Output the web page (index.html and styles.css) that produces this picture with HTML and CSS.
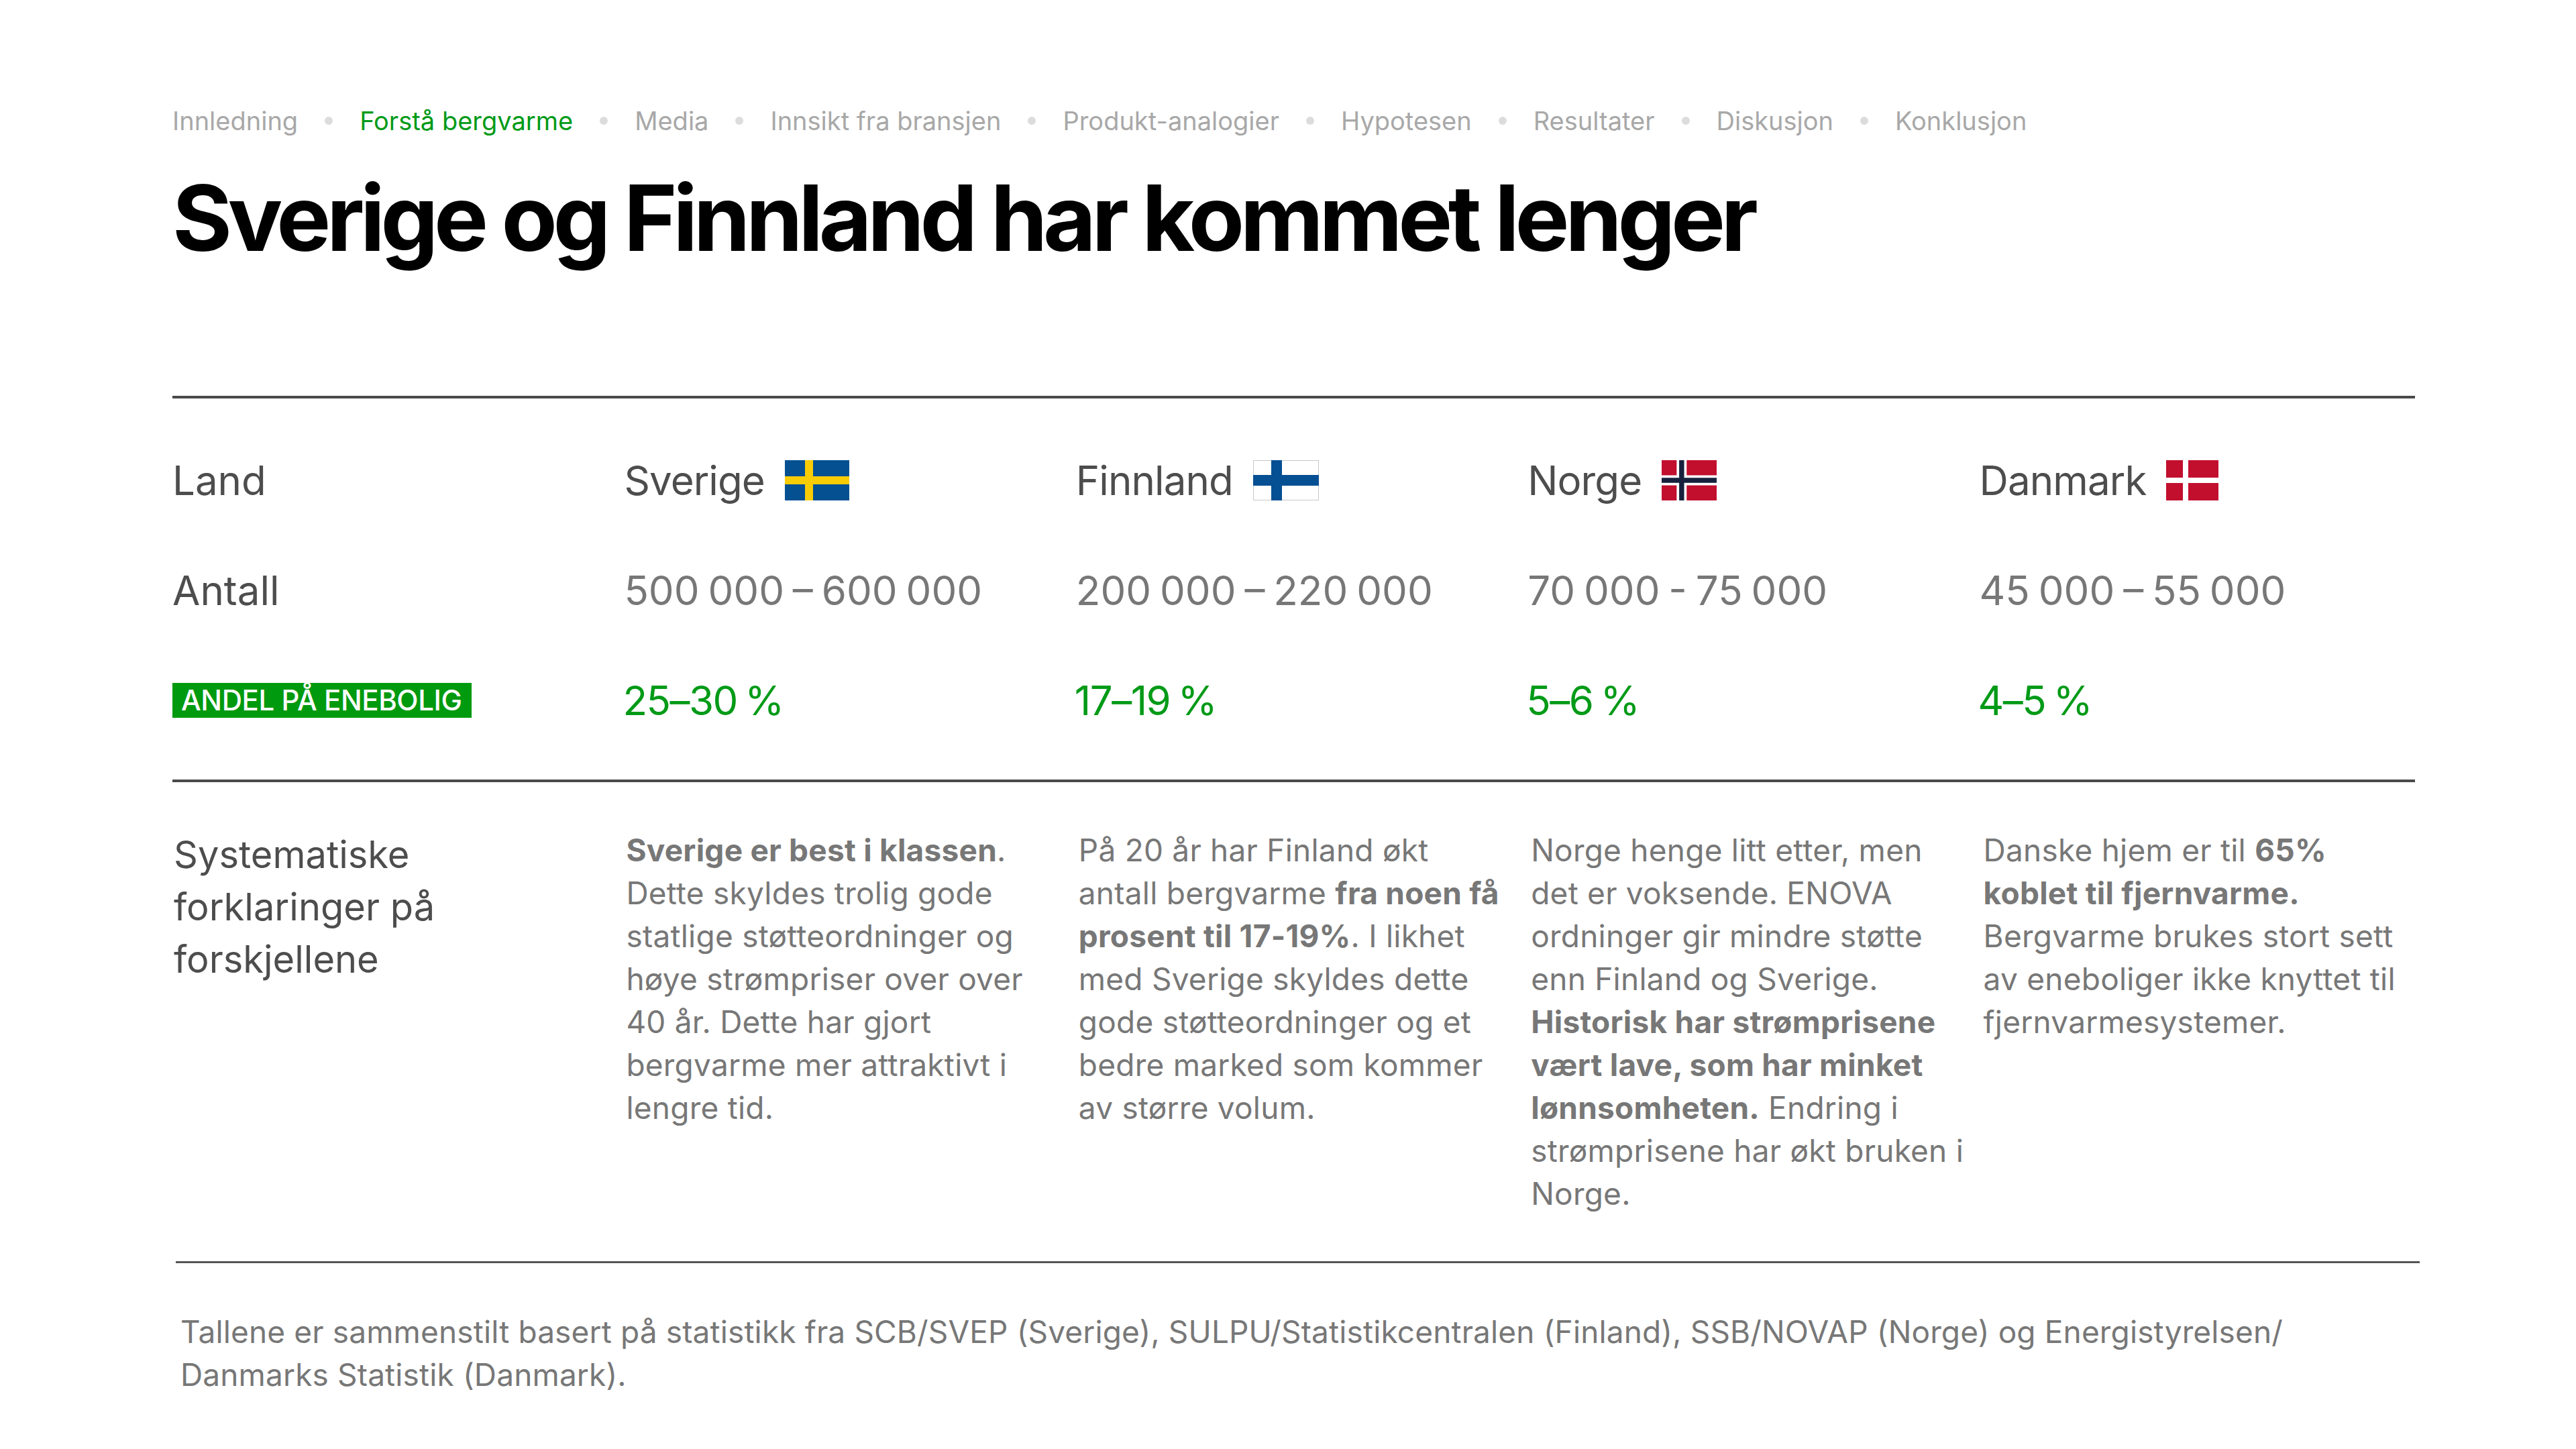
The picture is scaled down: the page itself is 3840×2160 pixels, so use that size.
FILE: index.html
```html
<!DOCTYPE html>
<html lang="no">
<head>
<meta charset="utf-8">
<title>Sverige og Finnland har kommet lenger</title>
<link rel="stylesheet" href="styles.css">
</head>
<body>
<main class="slide">
  <nav class="crumbs">
    <span class="crumb">Innledning</span><span class="dot"></span>
    <span class="crumb active">Forstå bergvarme</span><span class="dot"></span>
    <span class="crumb">Media</span><span class="dot"></span>
    <span class="crumb">Innsikt fra bransjen</span><span class="dot"></span>
    <span class="crumb">Produkt-analogier</span><span class="dot"></span>
    <span class="crumb">Hypotesen</span><span class="dot"></span>
    <span class="crumb">Resultater</span><span class="dot"></span>
    <span class="crumb">Diskusjon</span><span class="dot"></span>
    <span class="crumb">Konklusjon</span>
  </nav>

  <h1 class="title">Sverige og Finnland har kommet lenger</h1>

  <section class="table">
    <div class="row">
      <div class="label">Land</div>
      <div class="country"><span class="name">Sverige</span>
        <svg class="flag" width="96" height="60" viewBox="0 0 16 10" preserveAspectRatio="none"><rect width="16" height="10" fill="#055091"/><rect x="5" width="2" height="10" fill="#f9cc05"/><rect y="4" width="16" height="2" fill="#f9cc05"/></svg>
      </div>
      <div class="country"><span class="name">Finnland</span>
        <svg class="flag" width="98" height="60" viewBox="0 0 98 60"><rect x="0.5" y="0.5" width="97" height="59" fill="#fff" stroke="#c8c8c8"/><rect x="27" width="16" height="60" fill="#054f93"/><rect y="22" width="98" height="16" fill="#054f93"/></svg>
      </div>
      <div class="country"><span class="name">Norge</span>
        <svg class="flag" width="82" height="60" viewBox="0 0 22 16" preserveAspectRatio="none"><rect width="22" height="16" fill="#c20f2e"/><rect x="6" width="4" height="16" fill="#fff"/><rect y="6" width="22" height="4" fill="#fff"/><rect x="7" width="2" height="16" fill="#17213d"/><rect y="7" width="22" height="2" fill="#17213d"/></svg>
      </div>
      <div class="country"><span class="name">Danmark</span>
        <svg class="flag" width="78" height="60" viewBox="0 0 78 60"><rect width="78" height="60" fill="#c20f2e"/><rect x="25" width="8" height="60" fill="#fff"/><rect y="26" width="78" height="8" fill="#fff"/></svg>
      </div>
    </div>
    <div class="row">
      <div class="label">Antall</div>
      <div class="value">500 000 – 600 000</div>
      <div class="value">200 000 – 220 000</div>
      <div class="value">70 000 - 75 000</div>
      <div class="value">45 000 – 55 000</div>
    </div>
    <div class="row">
      <div class="label"><span class="badge">ANDEL PÅ ENEBOLIG</span></div>
      <div class="share">25–30 %</div>
      <div class="share">17–19 %</div>
      <div class="share">5–6 %</div>
      <div class="share">4–5 %</div>
    </div>
  </section>

  <section class="explain">
    <div class="explain-label">Systematiske forklaringer på forskjellene</div>
    <p class="explain-text"><strong>Sverige er best i klassen</strong>. Dette skyldes trolig gode statlige støtteordninger og høye strømpriser over over 40 år. Dette har gjort bergvarme mer attraktivt i lengre tid.</p>
    <p class="explain-text">På 20 år har Finland økt antall bergvarme <strong>fra noen få prosent til 17-19%</strong>. I likhet med Sverige skyldes dette gode støtteordninger og et bedre marked som kommer av større volum.</p>
    <p class="explain-text">Norge henge litt etter, men det er voksende. ENOVA ordninger gir mindre støtte enn Finland og Sverige. <strong>Historisk har strømprisene vært lave, som har minket lønnsomheten.</strong> Endring i strømprisene har økt bruken i Norge.</p>
    <p class="explain-text">Danske hjem er til <strong>65% koblet til fjernvarme.</strong> Bergvarme brukes stort sett av eneboliger ikke knyttet til fjernvarmesystemer.</p>
  </section>

  <hr class="rule">

  <p class="note">Tallene er sammenstilt basert på statistikk fra SCB/SVEP (Sverige), SULPU/Statistikcentralen (Finland), SSB/NOVAP (Norge) og Energistyrelsen/<wbr>Danmarks Statistik (Danmark).</p>
</main>
</body>
</html>
```

FILE: styles.css
```css
* { box-sizing: border-box; }

html, body {
  margin: 0;
  padding: 0;
  background: #ffffff;
}

body {
  font-family: "Inter", "Liberation Sans", sans-serif;
  color: #4d4d4d;
}

.slide {
  width: 3840px;
  height: 2160px;
  padding: 157px 0 0 257px;
  overflow: hidden;
}

/* breadcrumb */
.crumbs {
  display: flex;
  align-items: center;
  gap: 40px;
  height: 46px;
  font-size: 38px;
  line-height: 46px;
  color: #a8a8a8;
  white-space: nowrap;
}

.crumb.active { color: #009a17; }

.dot {
  width: 12px;
  height: 12px;
  border-radius: 50%;
  background: #dcdcdc;
}

/* headline */
.title {
  margin: 47px 0 0 0;
  font-size: 136px;
  line-height: 150px;
  font-weight: 700;
  letter-spacing: -0.047em;
  color: #000;
}

/* table */
.table {
  width: 3343px;
  margin-top: 190px;
  padding: 92px 0 88px;
  border-top: 4px solid #4a4a4a;
  border-bottom: 4px solid #4a4a4a;
  display: flex;
  flex-direction: column;
  gap: 104px;
}

.row {
  display: grid;
  grid-template-columns: repeat(5, 1fr);
  column-gap: 24px;
  height: 60px;
  align-items: center;
  font-size: 60px;
  line-height: 60px;
}

.label { color: #4d4d4d; display: flex; align-items: center; }

.country {
  display: flex;
  align-items: center;
  gap: 30px;
  color: #4d4d4d;
}

.country .name { letter-spacing: -0.015em; }

.flag { display: block; flex: none; }

.value { color: #777; word-spacing: -4px; }

.share {
  color: #009a17;
  margin-left: -2px;
  letter-spacing: -0.025em;
  word-spacing: -4px;
}

.badge {
  display: inline-block;
  height: 52px;
  padding: 0 15px 0 13px;
  background: #009a0f;
  color: #fff;
  font-size: 42px;
  line-height: 52px;
  font-weight: 500;
  letter-spacing: -0.01em;
}

/* explanations */
.explain {
  width: 3348px;
  margin: 69px 0 0 2px;
  display: grid;
  grid-template-columns: repeat(5, 1fr);
  column-gap: 24px;
  align-items: start;
}

.explain-label {
  font-size: 56px;
  line-height: 78px;
  color: #4d4d4d;
  padding-right: 140px;
}

.explain-text {
  margin: 0;
  font-size: 46px;
  line-height: 64px;
  letter-spacing: 0.005em;
  color: #777;
}

.explain-text strong { font-weight: 700; }

.rule {
  width: 3345px;
  margin: 69px 0 0 5px;
  border: 0;
  height: 3px;
  background: #555;
}

.note {
  width: 3340px;
  margin: 70px 0 0 12px;
  font-size: 46px;
  line-height: 64px;
  letter-spacing: 0.003em;
  color: #777;
}
```
